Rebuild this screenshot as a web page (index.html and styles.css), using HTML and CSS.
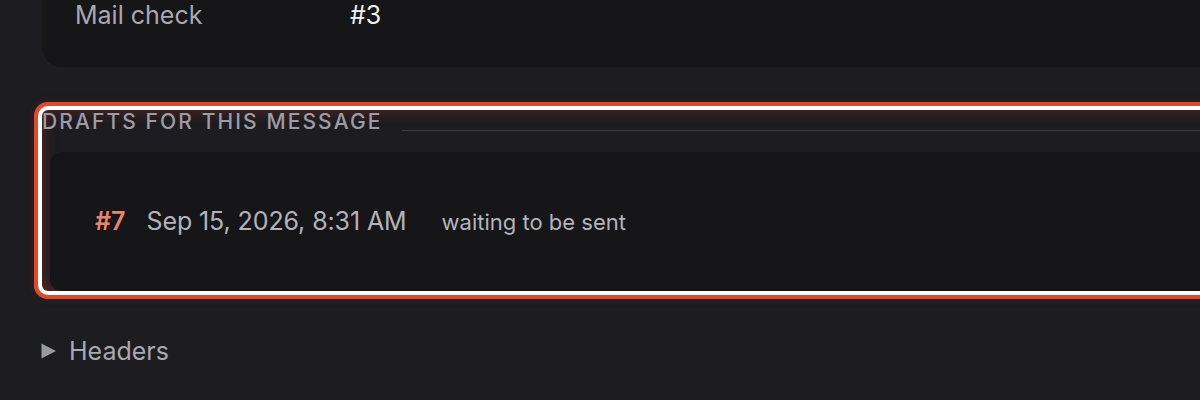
FILE: index.html
```html
<!DOCTYPE html>
<html lang="en">
<head>
<meta charset="utf-8">
<title>Message</title>
<link rel="stylesheet" href="styles.css">
</head>
<body>
<main class="page">
  <section class="info-card">
    <div class="info-row">
      <span class="info-label">Mail check</span>
      <span class="info-value">#3</span>
    </div>
  </section>

  <section class="drafts">
    <div class="drafts-head">
      <h2 class="drafts-title">Drafts for this message</h2>
      <span class="drafts-rule"></span>
    </div>
    <div class="drafts-card">
      <div class="draft-row">
        <span class="draft-id">#7</span>
        <span class="draft-date">Sep 15, 2026, 8:31 AM</span>
        <span class="draft-status">waiting to be sent</span>
      </div>
    </div>
  </section>

  <details class="headers">
    <summary class="headers-summary">
      <svg class="headers-caret" width="15" height="16" viewBox="0 0 15 16" aria-hidden="true"><polygon points="0.5,0.5 15,8 0.5,15.5" fill="currentColor"/></svg>
      <span>Headers</span>
    </summary>
  </details>
</main>
</body>
</html>
```

FILE: styles.css
```css
html, body {
  margin: 0;
  padding: 0;
  background: #1d1c21;
  overflow: hidden;
}

body {
  font-family: Inter, "Liberation Sans", sans-serif;
  color: #b4b4bc;
  width: 1200px;
  height: 400px;
}

.page {
  padding-left: 42px;
  margin-right: -200px;
}

.info-card {
  margin-top: -40px;
  background: #161518;
  border-radius: 20px;
  padding: 40px 33px 37px;
}

.info-row {
  display: flex;
  font-size: 25px;
  line-height: 30px;
}

.info-label {
  width: 275px;
  color: #a9a9b1;
}

.info-value {
  color: #f2f2f4;
}

.drafts {
  margin-top: 43px;
  border-radius: 6px;
  box-shadow: 0 0 0 4px #ffffff, 0 0 0 8px #e0492c, 0 0 10px 8px rgba(224, 73, 44, 0.15), inset 0 0 16px rgba(224, 73, 44, 0.32);
}

.drafts-head {
  display: flex;
  align-items: flex-end;
}

.drafts-title {
  margin: 0;
  font-size: 21px;
  line-height: 24px;
  font-weight: 500;
  letter-spacing: 0.1em;
  text-transform: uppercase;
  color: #9d9ca4;
}

.drafts-rule {
  flex: 1;
  height: 1px;
  margin: 0 0 3px 20px;
  background: #3b3a40;
}

.drafts-card {
  margin: 18px 0 0 8px;
  background: #161518;
  border-radius: 12px;
  padding: 55px 45px;
}

.draft-row {
  display: flex;
  align-items: baseline;
  line-height: 28px;
}

.draft-id {
  font-size: 25px;
  font-weight: 600;
  color: #e8876a;
  margin-right: 21px;
}

.draft-date {
  font-size: 25px;
  letter-spacing: -0.1px;
  color: #b3b3bb;
  margin-right: 35px;
}

.draft-status {
  font-size: 22px;
  color: #b4b4bc;
}

.headers {
  margin-top: 45px;
}

.headers-summary {
  list-style: none;
  display: flex;
  align-items: center;
  gap: 13px;
  margin-left: -1px;
  font-size: 25px;
  line-height: 30px;
  color: #a9a9b1;
}

.headers-summary::-webkit-details-marker {
  display: none;
}

.headers-caret {
  color: #9a9aa2;
}
```
